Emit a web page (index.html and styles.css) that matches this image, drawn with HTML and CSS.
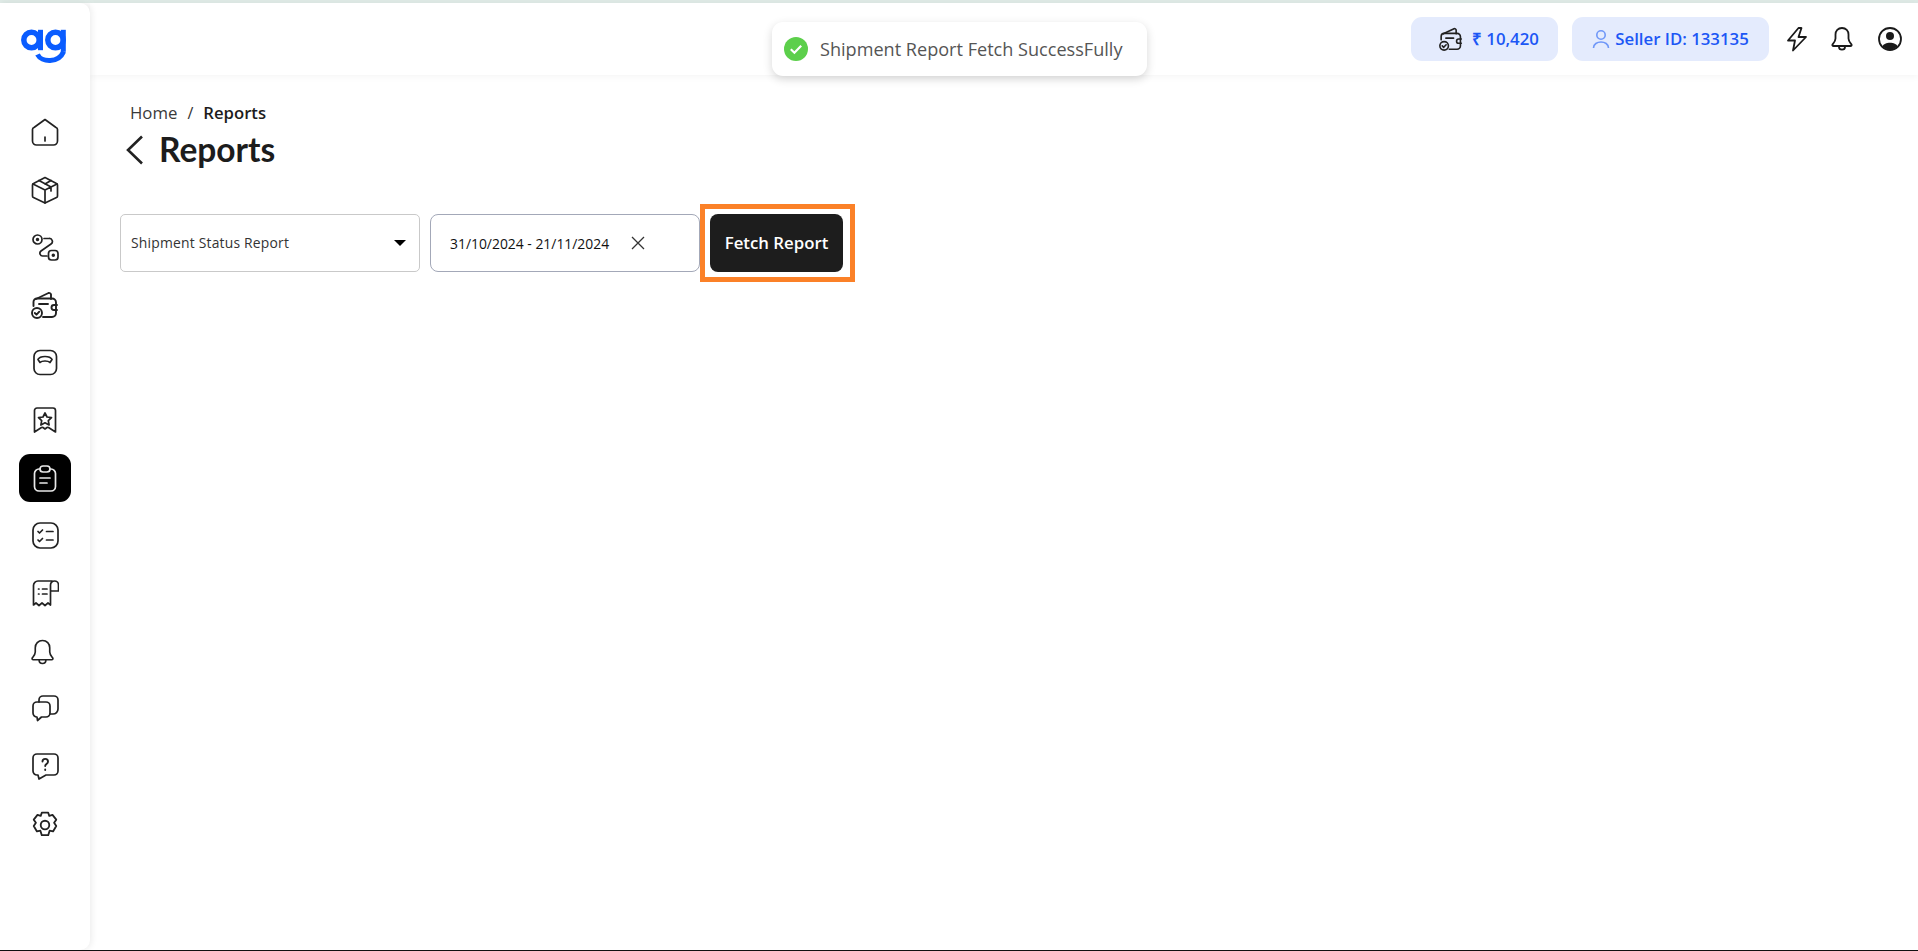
FILE: index.html
```html
<!DOCTYPE html>
<html lang="en">
<head>
<meta charset="utf-8">
<title>Reports</title>
<link rel="stylesheet" href="styles.css">
</head>
<body>
<div class="app">
  <div class="top-line"></div>
  <div class="frame">
    <aside class="sidebar">
      <div class="logo">
        <svg width="46" height="36" viewBox="0 0 46 36" fill="none" stroke="#0a5cff" stroke-width="5.500">
          <circle cx="11.500" cy="12" r="7.700"/>
          <path d="M20.500 1.800v20.400" stroke-width="5"/>
          <circle cx="35.500" cy="12" r="7.700"/>
          <path d="M43.300 1.800v22" stroke-width="5"/>
          <path d="M17.500 26.500c4 8 21 9 26.200-3" stroke-width="5"/>
        </svg>
      </div>
      <nav class="nav">
        <a class="nav-item"><svg class="ico" viewBox="0 0 28 28"><path d="M14 1.500 25 9.500a2 2 0 0 1 1.500 2V23a4 4 0 0 1-4 4H5.500a4 4 0 0 1-4-4V11.500A2 2 0 0 1 3 9.500Z"/><path d="M14 19v4"/></svg></a>
        <a class="nav-item"><svg class="ico" viewBox="0 0 28 28"><path d="M14 1.500 25.500 7.500a1.500 1.500 0 0 1 1 1.500v11a1.500 1.500 0 0 1-1 1.500L14 27 2.500 21.500a1.500 1.500 0 0 1-1-1.500V9a1.500 1.500 0 0 1 1-1.500Z"/><path d="M2 8l12 6 12-6M14 14v13M8 4.500 20 11v4M20 4.500 14 8"/></svg></a>
        <a class="nav-item"><svg class="ico" viewBox="0 0 28 28"><circle cx="6.500" cy="6.500" r="4.500"/><circle cx="6.500" cy="6.500" r=".9"/><rect x="17.500" y="17.500" width="9.500" height="9.500" rx="3"/><circle cx="22.300" cy="22.300" r=".9"/><path d="M13 5.500h5a3 3 0 0 1 2 5.500L10 18a2.800 2.800 0 0 0 2 5h4"/></svg></a>
        <a class="nav-item"><svg class="ico ico-bold" viewBox="0 0 28 28"><path d="M5 8 17.500 2a2 2 0 0 1 2.500 1.500V8"/><path d="M2.500 15V11a3.500 3.500 0 0 1 3.500-3.500h15a4 4 0 0 1 4 4V22a4 4 0 0 1-4 4H12"/><path d="M26 14h-3a2.500 2.500 0 0 0 0 5h3"/><path d="M8 13h9"/><circle cx="6" cy="22" r="5"/><path d="m3.800 22 1.700 1.700 2.800-3"/></svg></a>
        <a class="nav-item"><svg class="ico" viewBox="0 0 28 28"><rect x="3" y="2.500" width="22.500" height="24" rx="6"/><path d="M7 11.500C9 7.500 19 7.500 21 11.500L19 14.500C17 12.500 11 12.500 9 14.500Z"/></svg></a>
        <a class="nav-item"><svg class="ico" viewBox="0 0 28 28"><path d="M6 2h16a2.500 2.500 0 0 1 2.500 2.500V26l-7-4.500a2 2 0 0 0-1.500 0L14 23l-2-1.500a2 2 0 0 0-1.500 0L3.500 26V4.500A2.500 2.500 0 0 1 6 2Z"/><path d="m14 7 2 4 4.500.6-3.200 3 .8 4.400-4.100-2.200-4.100 2.200.8-4.400-3.200-3 4.500-.6Z"/></svg></a>
        <a class="nav-item active"><svg class="ico" viewBox="0 0 28 28"><path d="M9 5H8a4.500 4.500 0 0 0-4.500 4.500v13A4.500 4.500 0 0 0 8 27h12a4.500 4.500 0 0 0 4.500-4.500v-13A4.500 4.500 0 0 0 20 5h-1"/><rect x="9" y="2" width="10" height="6" rx="3"/><path d="M9 14h10M9 19h7"/></svg></a>
        <a class="nav-item"><svg class="ico" viewBox="0 0 28 28"><rect x="2" y="2" width="25" height="25" rx="7"/><path d="m7 10.500 1.500 1.500 3-3M15.500 10.500H22M7 19l1.500 1.500 3-3M15.500 19H22"/></svg></a>
        <a class="nav-item"><svg class="ico" viewBox="0 0 28 28"><path d="M21 2H7A4.500 4.500 0 0 0 2.500 6.500V26l2.500-2 3 2.500 3-2.500 3 2.500 3-2.500 2.500 2V6a4 4 0 0 1 8 0v6h-7"/><path d="M7.500 10h.5M11.500 10H16M7.500 15h.5M11.500 15H16"/></svg></a>
        <a class="nav-item"><svg class="ico ico-bell" viewBox="0 0 28 28"><path d="M14 1.500c-4.500 0-7.500 3.500-7.500 7.500v4.500c0 2.500-1 3.500-3 6-.7 1-.2 2 1 2h19c1.200 0 1.700-1 1-2-2-2.500-3-3.500-3-6V9c0-4-3-7.500-7.500-7.500Z"/><path d="M10.500 22c0 4.500 7 4.500 7 0"/></svg></a>
        <a class="nav-item"><svg class="ico" viewBox="0 0 28 28"><path d="M8 8V6a4 4 0 0 1 4-4h11a4 4 0 0 1 4 4v9a5 5 0 0 1-5 5h-3"/><path d="M6 8h9a4 4 0 0 1 4 4v7a4 4 0 0 1-4 4h-4.500l-4 3.500-.5-3.500a4 4 0 0 1-4-4v-7a4 4 0 0 1 4-4Z"/></svg></a>
        <a class="nav-item"><svg class="ico" viewBox="0 0 28 28"><path d="M6 2h17a4 4 0 0 1 4 4v13a4 4 0 0 1-4 4h-8l-7 4-1-4H6a4 4 0 0 1-4-4V6a4 4 0 0 1 4-4Z"/><path d="M11.500 9.500c0-3.500 5.500-3.500 5.500 0 0 2.500-2.800 2.500-2.800 4.500M14.200 17.500v.6" stroke-width="1.900"/></svg></a>
        <a class="nav-item"><svg class="ico ico-gear" viewBox="0 0 28 28"><circle cx="14" cy="14" r="4"/><path d="M11 2.500h6l1 3 3-1 3.500 4.500-2 3 2 3-3 5-3.200-.7-1.300 4.200h-6l-1.300-4.200-3.200.7-3-5 2-3-2-3L7 4.500l3 1Z" stroke-linejoin="round"/></svg></a>
      </nav>
    </aside>
    <div class="content">
      <header class="topbar">
        <div class="pill pill-wallet">
          <svg class="ico ico-small" viewBox="0 0 28 28"><path d="M5 8 17.500 2a2 2 0 0 1 2.500 1.500V8"/><path d="M2.500 15V11a3.500 3.500 0 0 1 3.500-3.500h15a4 4 0 0 1 4 4V22a4 4 0 0 1-4 4H12"/><path d="M26 14h-3a2.500 2.500 0 0 0 0 5h3"/><path d="M8 13h9"/><circle cx="6" cy="22" r="5"/><path d="m3.800 22 1.700 1.700 2.800-3"/></svg>
          <span>₹ 10,420</span>
        </div>
        <div class="pill pill-seller">
          <svg class="user-ico" width="18" height="20" viewBox="0 0 18 20"><circle cx="9" cy="6" r="4.200"/><path d="M1.500 19c0-8 15-8 15 0"/></svg>
          <span>Seller ID: 133135</span>
        </div>
        <div class="top-icons">
          <svg class="top-ico" width="24" height="26" viewBox="0 0 24 26"><path d="M13.500 2 3 14.500h7L8 24.500 21 11h-7.500l3-9Z"/></svg>
          <svg class="top-ico" width="24" height="26" viewBox="0 0 24 26"><path d="M12 2C8 2 5.500 5 5.500 8.500v4c0 2.500-1 3.500-3 6-.5.800 0 1.500 1 1.500h17c1 0 1.500-.7 1-1.500-2-2.500-3-3.500-3-6v-4C18.500 5 16 2 12 2Z"/><path d="M9 21c0 3.500 6 3.500 6 0"/></svg>
          <svg class="top-avatar" width="24" height="24" viewBox="0 0 24 24"><circle cx="12" cy="12" r="11" fill="none" stroke="#1a1a1a" stroke-width="1.800"/><circle cx="12" cy="9" r="4" fill="#1a1a1a"/><path d="M4.500 19.500C6 14.500 18 14.500 19.500 19.500 15 23.500 9 23.500 4.500 19.500Z" fill="#1a1a1a"/></svg>
        </div>
      </header>
      <main class="page">
        <div class="crumbs"><span class="crumb">Home</span><span class="crumb-sep">/</span><span class="crumb-current">Reports</span></div>
        <div class="title-row">
          <svg class="back" width="18" height="30" viewBox="0 0 18 30"><path d="M16 1.500 2 15l14 13.500"/></svg>
          <h1>Reports</h1>
        </div>
        <div class="filters">
          <div class="field select"><span class="select-label">Shipment Status Report</span><i class="caret"></i></div>
          <div class="field date"><span>31/10/2024 - 21/11/2024</span>
            <svg class="clear" width="14" height="14" viewBox="0 0 14 14"><path d="M1 1l12 12M13 1 1 13"/></svg>
          </div>
          <button class="fetch">Fetch Report</button>
        </div>
      </main>
    </div>
  </div>
  <div class="bottom-line"></div>
  <div class="toast">
    <svg width="24" height="24" viewBox="0 0 24 24"><circle cx="12" cy="12" r="12" fill="#5ccf4b"/><path d="m6.800 12.300 3.600 3.500 6.800-7" fill="none" stroke="#fff" stroke-width="2.200"/></svg>
    <span>Shipment Report Fetch SuccessFully</span>
  </div>
</div>
</body>
</html>
```
FILE: styles.css
```css
* { box-sizing: border-box; }
html, body { margin: 0; height: 100%; background: #fff; overflow: hidden; }
body { font-family: "Open Sans", sans-serif; color: #1c1c1c; }
.app { height: 951px; display: flex; flex-direction: column; position: relative; }
.top-line { height: 3px; background: #dfeae6; flex: none; }
.bottom-line { height: 1.500px; background: #111; flex: none; }
.frame { flex: 1; display: flex; min-height: 0; }
.sidebar {
  width: 90px; flex: none; background: #fff; position: relative; z-index: 2;
  border-radius: 0 10px 10px 0;
  box-shadow: 2px 0 6px rgba(0,0,0,.07);
  display: flex; flex-direction: column; align-items: center;
}
.logo { padding: 25px 4px 0 0; height: 105px; width: 100%; display: flex; justify-content: center; align-items: flex-start; }
.nav { display: flex; flex-direction: column; gap: 9.600px; align-items: center; }
.nav-item { width: 52px; height: 48px; display: flex; align-items: center; justify-content: center; border-radius: 11px; }
.nav-item.active { background: #000; }
.nav-item.active .ico { stroke: #e8e8e8; }
.ico { width: 28px; height: 28px; fill: none; stroke: #222; stroke-width: 1.700; stroke-linecap: round; stroke-linejoin: round; }
.ico-bold { stroke-width: 1.900; }
.ico-bell { width: 27px; height: 27px; margin: 4px 6px 0 0; }
.ico-gear { width: 30px; height: 30px; margin-top: 3px; }
.ico-small { width: 24px; height: 24px; stroke-width: 1.900; }
.content { flex: 1; min-width: 0; display: flex; flex-direction: column; }
.topbar {
  height: 72px; flex: none; background: #fff; display: flex; align-items: center; justify-content: flex-end;
  padding: 0 16px 0 0; gap: 14px; box-shadow: 0 1px 8px rgba(0,0,0,.05);
  position: relative; z-index: 1;
}
.pill { height: 44px; border-radius: 11px; background: #e4ebfd; color: #1c57f5; font-size: 16.800px; font-weight: 600; display: flex; align-items: center; padding-bottom: 1px; }
.pill-wallet { width: 147px; padding-left: 28px; gap: 9px; }
.pill-seller { width: 197px; justify-content: center; gap: 5px; }
.user-ico { fill: none; stroke: #6f97f8; stroke-width: 1.600; }
.top-icons { display: flex; align-items: center; gap: 21px; margin-left: 2px; }
.top-avatar { margin-left: 3px; }
.top-ico { fill: none; stroke: #1a1a1a; stroke-width: 1.800; stroke-linejoin: round; }
.page { flex: 1; padding: 26px 0 0 30px; }
.crumbs { display: flex; align-items: center; padding-left: 10px; height: 23px; }
.crumb { font-size: 16.800px; color: #3a3a3a; }
.crumb-sep { font-size: 16px; margin: 0 10px; color: #333; }
.crumb-current { font-size: 16.700px; font-weight: 600; }
.title-row { display: flex; align-items: center; gap: 15px; height: 51px; padding-left: 6px; }
.back { fill: none; stroke: #222; stroke-width: 2.600; }
h1 { margin: 0; font-family: Lato, sans-serif; font-size: 33.500px; font-weight: 700; color: #1c1c1c; line-height: 1; }
.filters { display: flex; gap: 10px; margin-top: 39px; }
.field { height: 58px; background: #fff; border-radius: 5px; display: flex; align-items: center; font-size: 13.900px; }
.select { width: 300px; border: 1px solid #c9c9c9; padding: 0 13px 0 10px; justify-content: space-between; }
.select-label { letter-spacing: .2px; color: #333; padding-bottom: 2px; }
.caret { width: 0; height: 0; border-left: 6.500px solid transparent; border-right: 6.500px solid transparent; border-top: 6.500px solid #000; }
.date { width: 270px; border: 1px solid #a3a8b8; padding-left: 19px; color: #111; border-radius: 8px; }
.clear { margin-left: 22px; fill: none; stroke: #333; stroke-width: 1.300; }
.fetch {
  position: relative; width: 133px; height: 58px; background: #1d1d1d; color: #fff; border: 0; border-radius: 8px;
  font-family: inherit; font-size: 16.800px; font-weight: 600; padding: 0 0 2px;
}
.fetch::after { content: ""; position: absolute; inset: -10px -12px -10px -10px; border: 5px solid #fb8128; pointer-events: none; }
.toast {
  position: absolute; left: 772px; top: 22px; width: 375px; height: 54px; background: #fff; border-radius: 11px;
  box-shadow: 0 3px 10px rgba(0,0,0,.16); display: flex; align-items: center; gap: 12px; padding-left: 12px;
  font-size: 18.100px; color: #555; z-index: 5;
}
```
